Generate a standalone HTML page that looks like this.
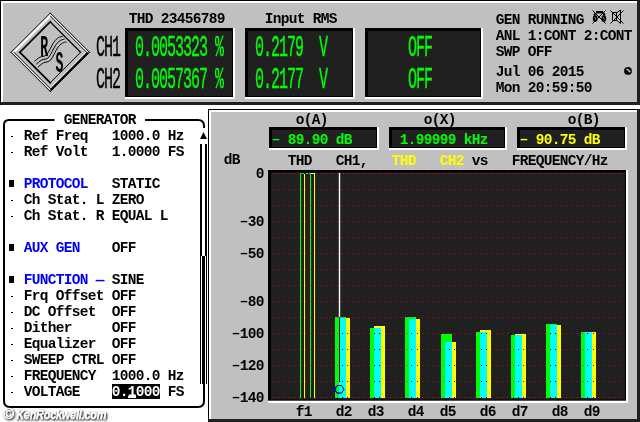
<!DOCTYPE html>
<html lang="en"><head><meta charset="utf-8"><title>Audio Analyzer - THD</title>
<style>
html,body{margin:0;padding:0;background:#fff;}
body{width:640px;height:422px;overflow:hidden;}
svg{display:block;will-change:transform;}
text{font-family:"Liberation Mono","DejaVu Sans Mono",monospace;font-weight:bold;font-size:14.5px;letter-spacing:-0.7px;fill:#000;white-space:pre;}
.big{font-weight:normal;stroke-width:0.2px;font-size:15px;letter-spacing:-1px;}
.g{fill:#00ff00;}
.y{fill:#ffff00;}
.b{fill:#0000ff;}
.wm{font-family:"Liberation Sans",sans-serif;font-style:italic;font-weight:bold;font-size:13px;letter-spacing:-0.2px;fill:#fff;stroke:#fff;stroke-width:0.25px;}
</style></head><body>
<svg width="640" height="422" viewBox="0 0 640 422">
<rect x="0" y="0" width="640" height="422" fill="#fff"/>
<g shape-rendering="crispEdges">
<rect x="0" y="0" width="640" height="105" fill="#202020" />
<rect x="0" y="0" width="639" height="1" fill="#000" />
<rect x="0" y="0" width="1" height="105" fill="#000" />
<rect x="1" y="1" width="636" height="101" fill="#fff" />
<rect x="3" y="3" width="634" height="99" fill="#c0c0c0" />
<rect x="125" y="28" width="110" height="71" fill="#fff" />
<rect x="125" y="28" width="108" height="69" fill="#000" />
<rect x="128" y="31" width="104" height="65" fill="#202020" />
<rect x="245" y="28" width="110" height="71" fill="#fff" />
<rect x="245" y="28" width="108" height="69" fill="#000" />
<rect x="248" y="31" width="104" height="65" fill="#202020" />
<rect x="365" y="28" width="118" height="71" fill="#fff" />
<rect x="365" y="28" width="116" height="69" fill="#000" />
<rect x="368" y="31" width="112" height="65" fill="#202020" />
</g>
<g id="logo">
<polygon points="11.30,52.30 50.30,13.30 50.30,17.30 15.30,52.30" fill="#fff"/>
<polygon points="89.90,52.30 50.30,91.90 50.30,88.70 86.70,52.30" fill="#000"/>
<line x1="85.90" y1="52.30" x2="50.30" y2="87.90" stroke="#fff" stroke-width="0.8" stroke-linecap="square"/>
<line x1="50.30" y1="14.30" x2="88.30" y2="52.30" stroke="#fff" stroke-width="0.9" stroke-linecap="square"/>
<line x1="50.30" y1="16.10" x2="86.50" y2="52.30" stroke="#000" stroke-width="0.8" stroke-linecap="square"/>
<line x1="50.30" y1="90.30" x2="12.30" y2="52.30" stroke="#fff" stroke-width="0.9" stroke-linecap="square"/>
<line x1="50.30" y1="88.50" x2="14.10" y2="52.30" stroke="#000" stroke-width="0.8" stroke-linecap="square"/>
<line x1="11.10" y1="52.30" x2="50.30" y2="13.10" stroke="#000" stroke-width="1.0" stroke-linecap="square"/>
<line x1="50.30" y1="13.10" x2="89.50" y2="52.30" stroke="#000" stroke-width="1.0" stroke-linecap="square"/>
<line x1="50.30" y1="91.50" x2="11.10" y2="52.30" stroke="#000" stroke-width="1.0" stroke-linecap="square"/>
<line x1="89.50" y1="52.30" x2="50.30" y2="91.50" stroke="#000" stroke-width="1.0" stroke-linecap="square"/>
<line x1="19.80" y1="52.30" x2="50.30" y2="21.80" stroke="#000" stroke-width="1.7" stroke-linecap="square"/>
<line x1="50.30" y1="82.80" x2="19.80" y2="52.30" stroke="#000" stroke-width="1.7" stroke-linecap="square"/>
<line x1="50.30" y1="22.00" x2="80.60" y2="52.30" stroke="#000" stroke-width="1.2" stroke-linecap="square"/>
<line x1="80.60" y1="52.30" x2="50.30" y2="82.60" stroke="#000" stroke-width="1.0" stroke-linecap="square"/>
<path d="M34.30,61.40 C35.25,60.68 37.95,58.22 40.00,57.10 C42.05,55.98 44.32,57.15 46.60,54.70 C48.88,52.25 51.73,45.23 53.70,42.40 C55.67,39.57 56.90,38.72 58.40,37.70 C59.90,36.68 61.98,36.53 62.70,36.30" fill="none" stroke="#000" stroke-width="1"/>
<path d="M36.20,64.20 C37.15,63.48 39.85,61.02 41.90,59.90 C43.95,58.78 46.22,59.95 48.50,57.50 C50.78,55.05 53.63,48.03 55.60,45.20 C57.57,42.37 58.80,41.52 60.30,40.50 C61.80,39.48 63.88,39.33 64.60,39.10" fill="none" stroke="#000" stroke-width="1"/>
<path d="M38.10,67.00 C39.05,66.28 41.75,63.82 43.80,62.70 C45.85,61.58 48.12,62.75 50.40,60.30 C52.68,57.85 55.53,50.83 57.50,48.00 C59.47,45.17 60.70,44.32 62.20,43.30 C63.70,42.28 65.78,42.13 66.50,41.90" fill="none" stroke="#000" stroke-width="1"/>
</g>
<text transform="translate(40.2,56.3) scale(0.88,2)" style="font-size:15px;letter-spacing:0">R</text>
<text transform="translate(55.6,71.5) scale(0.88,2)" style="font-size:15px;letter-spacing:0">S</text>
<text transform="translate(96,56) scale(1,2)" class="big " stroke="#000" xml:space="preserve">CH1</text>
<text transform="translate(96,88) scale(1,2)" class="big " stroke="#000" xml:space="preserve">CH2</text>
<text transform="translate(128.7,23) scale(1,1.035)" xml:space="preserve">THD 23456789</text>
<text transform="translate(264.7,23) scale(1,1.035)" xml:space="preserve">Input RMS</text>
<text transform="translate(135,56) scale(1,2)" class="big g" stroke="#00ff00" xml:space="preserve">0.0053323 %</text>
<text transform="translate(135,88) scale(1,2)" class="big g" stroke="#00ff00" xml:space="preserve">0.0057367 %</text>
<text transform="translate(255,56) scale(1,2)" class="big g" stroke="#00ff00" xml:space="preserve">0.2179  V</text>
<text transform="translate(255,88) scale(1,2)" class="big g" stroke="#00ff00" xml:space="preserve">0.2177  V</text>
<text transform="translate(408,56) scale(1,2)" class="big g" stroke="#00ff00" xml:space="preserve">OFF</text>
<text transform="translate(408,88) scale(1,2)" class="big g" stroke="#00ff00" xml:space="preserve">OFF</text>
<text transform="translate(495.7,24) scale(1,1.035)" xml:space="preserve">GEN RUNNING</text>
<text transform="translate(495.7,40) scale(1,1.035)" xml:space="preserve">ANL 1:CONT 2:CONT</text>
<text transform="translate(495.7,56) scale(1,1.035)" xml:space="preserve">SWP OFF</text>
<text transform="translate(495.7,76) scale(1,1.035)" xml:space="preserve">Jul 06 2015</text>
<text transform="translate(495.7,92) scale(1,1.035)" xml:space="preserve">Mon 20:59:50</text>
<g id="icons" fill="none" stroke="#000" stroke-width="1">
<path d="M592.5,10.5 L605.5,23.5 M605.5,10.5 L592.5,23.5"/>
<path d="M596,12.2 H603" stroke-width="2.4"/>
<path d="M595.6,13 L594.2,15.5 M603.4,13 L604.8,15.5" stroke-width="2"/>
<ellipse cx="595.2" cy="18.6" rx="2.4" ry="3.4" fill="#000" stroke="none"/><ellipse cx="603.8" cy="18.6" rx="2.4" ry="3.4" fill="#000" stroke="none"/>
<path d="M594.8,17 q1.3,1 0.6,2.6 M602.8,17 q1.5,0.6 1.2,2.4" stroke="#c0c0c0" stroke-width="0.8"/>
<rect x="598.4" y="16.4" width="1.6" height="1.6" fill="#000" stroke="none"/>
<path d="M610.5,10.5 L623.5,23.5 M623.5,10.5 L610.5,23.5"/>
<path d="M612.5,12.5 h4 v8 h-4z"/>
<path d="M616.5,13 L620.5,10 V23.5 L616.5,20"/>
</g>
<circle cx="628" cy="70.9" r="3.9" fill="#000"/><path d="M626.6,68.8 L630.4,72.1" stroke="#c0c0c0" stroke-width="1.5" fill="none"/>
<g id="genpanel">
<path d="M54.5,120 H9 Q4,120 4,125 V401 Q4,407 10,407 H198 Q204,407 204,401 V384" fill="none" stroke="#000" stroke-width="2"/>
<path d="M145,120 H198 Q204,120 204,126 V128" fill="none" stroke="#000" stroke-width="2"/>
<path d="M203.5,132 L207,139 H200 Z" fill="#000"/>
<g shape-rendering="crispEdges">
<rect x="200" y="144" width="2" height="112" fill="#000" />
<rect x="205" y="144" width="2" height="112" fill="#000" />
<rect x="200" y="256" width="1" height="128" fill="#000" />
<rect x="206" y="256" width="1" height="128" fill="#000" />
<rect x="202" y="256" width="3" height="128" fill="#000" />
</g></g>
<text transform="translate(63.7,124) scale(1,1.035)" xml:space="preserve">GENERATOR</text>
<rect x="11" y="136" width="2" height="1" fill="#000" shape-rendering="crispEdges"/>
<text transform="translate(23.7,140) scale(1,1.035)" xml:space="preserve">Ref Freq</text>
<text transform="translate(111.7,140) scale(1,1.035)" xml:space="preserve">1000.0 Hz</text>
<rect x="11" y="152" width="2" height="1" fill="#000" shape-rendering="crispEdges"/>
<text transform="translate(23.7,156) scale(1,1.035)" xml:space="preserve">Ref Volt</text>
<text transform="translate(111.7,156) scale(1,1.035)" xml:space="preserve">1.0000 FS</text>
<rect x="9" y="180" width="5" height="7" fill="#000" shape-rendering="crispEdges"/>
<text transform="translate(23.7,188) scale(1,1.035)" class="b" xml:space="preserve">PROTOCOL</text>
<text transform="translate(111.7,188) scale(1,1.035)" xml:space="preserve">STATIC</text>
<rect x="11" y="200" width="2" height="1" fill="#000" shape-rendering="crispEdges"/>
<text transform="translate(23.7,204) scale(1,1.035)" xml:space="preserve">Ch Stat. L</text>
<text transform="translate(111.7,204) scale(1,1.035)" xml:space="preserve">ZERO</text>
<rect x="11" y="216" width="2" height="1" fill="#000" shape-rendering="crispEdges"/>
<text transform="translate(23.7,220) scale(1,1.035)" xml:space="preserve">Ch Stat. R</text>
<text transform="translate(111.7,220) scale(1,1.035)" xml:space="preserve">EQUAL L</text>
<rect x="9" y="244" width="5" height="7" fill="#000" shape-rendering="crispEdges"/>
<text transform="translate(23.7,252) scale(1,1.035)" class="b" xml:space="preserve">AUX GEN</text>
<text transform="translate(111.7,252) scale(1,1.035)" xml:space="preserve">OFF</text>
<rect x="9" y="276" width="5" height="7" fill="#000" shape-rendering="crispEdges"/>
<text transform="translate(23.7,284) scale(1,1.035)" class="b" xml:space="preserve">FUNCTION —</text>
<text transform="translate(111.7,284) scale(1,1.035)" xml:space="preserve">SINE</text>
<rect x="11" y="296" width="2" height="1" fill="#000" shape-rendering="crispEdges"/>
<text transform="translate(23.7,300) scale(1,1.035)" xml:space="preserve">Frq Offset</text>
<text transform="translate(111.7,300) scale(1,1.035)" xml:space="preserve">OFF</text>
<rect x="11" y="312" width="2" height="1" fill="#000" shape-rendering="crispEdges"/>
<text transform="translate(23.7,316) scale(1,1.035)" xml:space="preserve">DC Offset</text>
<text transform="translate(111.7,316) scale(1,1.035)" xml:space="preserve">OFF</text>
<rect x="11" y="328" width="2" height="1" fill="#000" shape-rendering="crispEdges"/>
<text transform="translate(23.7,332) scale(1,1.035)" xml:space="preserve">Dither</text>
<text transform="translate(111.7,332) scale(1,1.035)" xml:space="preserve">OFF</text>
<rect x="11" y="344" width="2" height="1" fill="#000" shape-rendering="crispEdges"/>
<text transform="translate(23.7,348) scale(1,1.035)" xml:space="preserve">Equalizer</text>
<text transform="translate(111.7,348) scale(1,1.035)" xml:space="preserve">OFF</text>
<rect x="11" y="360" width="2" height="1" fill="#000" shape-rendering="crispEdges"/>
<text transform="translate(23.7,364) scale(1,1.035)" xml:space="preserve">SWEEP CTRL</text>
<text transform="translate(111.7,364) scale(1,1.035)" xml:space="preserve">OFF</text>
<rect x="11" y="376" width="2" height="1" fill="#000" shape-rendering="crispEdges"/>
<text transform="translate(23.7,380) scale(1,1.035)" xml:space="preserve">FREQUENCY</text>
<text transform="translate(111.7,380) scale(1,1.035)" xml:space="preserve">1000.0 Hz</text>
<rect x="11" y="392" width="2" height="1" fill="#000" shape-rendering="crispEdges"/>
<text transform="translate(23.7,396) scale(1,1.035)" xml:space="preserve">VOLTAGE</text>
<rect x="112" y="384" width="48" height="15" fill="#000" shape-rendering="crispEdges"/>
<text transform="translate(111.7,396) scale(1,1.035)" xml:space="preserve" style="fill:#fff">0.1000</text>
<rect x="128" y="396" width="8" height="2" fill="#fff" shape-rendering="crispEdges"/>
<text transform="translate(167.7,396) scale(1,1.035)" xml:space="preserve">FS</text>
<defs><filter id="ws" x="-5%" y="-30%" width="110%" height="170%"><feGaussianBlur in="SourceAlpha" stdDeviation="0.9" result="b"/><feOffset in="b" dx="0.8" dy="0.9" result="o"/><feComponentTransfer in="o" result="s"><feFuncA type="linear" slope="1.7"/></feComponentTransfer><feFlood flood-color="#505050" result="f"/><feComposite in="f" in2="s" operator="in" result="sh"/><feMerge><feMergeNode in="sh"/><feMergeNode in="SourceGraphic"/></feMerge></filter></defs>
<g filter="url(#ws)" style="fill:#fff;stroke:#fff;stroke-width:0.25px"><text x="3.6" y="419.3" class="wm" style="font-size:14px;font-style:normal;font-weight:normal;stroke-width:.5px">©</text><text x="16.2" y="419" class="wm" textLength="90" lengthAdjust="spacingAndGlyphs">KenRockwell.com</text></g>
<g shape-rendering="crispEdges">
<rect x="208" y="109" width="432" height="313" fill="#202020" />
<rect x="208" y="109" width="429" height="1" fill="#000" />
<rect x="208" y="109" width="1" height="313" fill="#000" />
<rect x="209" y="110" width="428" height="309" fill="#fff" />
<rect x="211" y="112" width="426" height="307" fill="#c0c0c0" />
<rect x="269" y="127" width="110" height="23" fill="#fff" />
<rect x="269" y="127" width="108" height="21" fill="#000" />
<rect x="272" y="130" width="104" height="17" fill="#202020" />
<rect x="389" y="127" width="118" height="23" fill="#fff" />
<rect x="389" y="127" width="116" height="21" fill="#000" />
<rect x="392" y="130" width="112" height="17" fill="#202020" />
<rect x="517" y="127" width="110" height="23" fill="#fff" />
<rect x="517" y="127" width="108" height="21" fill="#000" />
<rect x="520" y="130" width="104" height="17" fill="#202020" />
</g>
<rect x="268" y="170" width="360" height="233" fill="#fff" />
<rect x="268" y="170" width="358" height="230.7" fill="#000" />
<rect x="271" y="172.5" width="354" height="227" fill="#202020" />
<text transform="translate(295.7,124) scale(1,1.035)" xml:space="preserve">o(A)</text>
<text transform="translate(423.7,124) scale(1,1.035)" xml:space="preserve">o(X)</text>
<text transform="translate(567.7,124) scale(1,1.035)" xml:space="preserve">o(B)</text>
<text transform="translate(269.10,141.70) scale(1.6,0.8)" class="g">-</text>
<text transform="translate(279.7,144) scale(1,1.035)" class="g" xml:space="preserve"> 89.90 dB</text>
<text transform="translate(399.7,144) scale(1,1.035)" class="g" xml:space="preserve">1.99999 kHz</text>
<text transform="translate(517.10,141.70) scale(1.6,0.8)" class="y">-</text>
<text transform="translate(527.7,144) scale(1,1.035)" class="y" xml:space="preserve"> 90.75 dB</text>
<text transform="translate(223.7,164) scale(1,1.035)" xml:space="preserve">dB</text>
<text transform="translate(287.7,164.5) scale(1,1.035)" xml:space="preserve">THD</text>
<text transform="translate(335.7,164.5) scale(1,1.035)" xml:space="preserve">CH1,</text>
<text transform="translate(391.7,164.5) scale(1,1.035)" class="y" xml:space="preserve">THD</text>
<text transform="translate(439.7,164.5) scale(1,1.035)" class="y" xml:space="preserve">CH2</text>
<text transform="translate(471.7,164.5) scale(1,1.035)" xml:space="preserve">vs</text>
<text transform="translate(511.7,164.5) scale(1,1.035)" xml:space="preserve">FREQUENCY/Hz</text>
<text transform="translate(255.7,178) scale(1,1.035)" xml:space="preserve">0</text>
<text transform="translate(237.10,223.70) scale(1.6,0.8)">-</text>
<text transform="translate(247.7,226) scale(1,1.035)" xml:space="preserve">30</text>
<text transform="translate(237.10,255.70) scale(1.6,0.8)">-</text>
<text transform="translate(247.7,258) scale(1,1.035)" xml:space="preserve">50</text>
<text transform="translate(237.10,303.70) scale(1.6,0.8)">-</text>
<text transform="translate(247.7,306) scale(1,1.035)" xml:space="preserve">80</text>
<text transform="translate(229.10,335.70) scale(1.6,0.8)">-</text>
<text transform="translate(239.7,338) scale(1,1.035)" xml:space="preserve">100</text>
<text transform="translate(229.10,367.70) scale(1.6,0.8)">-</text>
<text transform="translate(239.7,370) scale(1,1.035)" xml:space="preserve">120</text>
<text transform="translate(229.10,399.70) scale(1.6,0.8)">-</text>
<text transform="translate(239.7,402) scale(1,1.035)" xml:space="preserve">140</text>
<g shape-rendering="crispEdges">
<path d="M273,173.5h1M276,173.5h1M279,173.5h1M282,173.5h1M285,173.5h1M289,173.5h1M292,173.5h1M295,173.5h1M298,173.5h1M317,173.5h1M321,173.5h1M324,173.5h1M327,173.5h1M330,173.5h1M333,173.5h1M337,173.5h1M340,173.5h1M343,173.5h1M346,173.5h1M349,173.5h1M353,173.5h1M356,173.5h1M359,173.5h1M362,173.5h1M365,173.5h1M369,173.5h1M372,173.5h1M375,173.5h1M378,173.5h1M381,173.5h1M385,173.5h1M388,173.5h1M391,173.5h1M394,173.5h1M397,173.5h1M401,173.5h1M404,173.5h1M407,173.5h1M410,173.5h1M413,173.5h1M417,173.5h1M420,173.5h1M423,173.5h1M426,173.5h1M429,173.5h1M433,173.5h1M436,173.5h1M439,173.5h1M442,173.5h1M445,173.5h1M449,173.5h1M452,173.5h1M455,173.5h1M458,173.5h1M461,173.5h1M465,173.5h1M468,173.5h1M471,173.5h1M474,173.5h1M477,173.5h1M481,173.5h1M484,173.5h1M487,173.5h1M490,173.5h1M493,173.5h1M497,173.5h1M500,173.5h1M503,173.5h1M506,173.5h1M509,173.5h1M513,173.5h1M516,173.5h1M519,173.5h1M522,173.5h1M525,173.5h1M529,173.5h1M532,173.5h1M535,173.5h1M538,173.5h1M541,173.5h1M545,173.5h1M548,173.5h1M551,173.5h1M554,173.5h1M557,173.5h1M561,173.5h1M564,173.5h1M567,173.5h1M570,173.5h1M573,173.5h1M577,173.5h1M580,173.5h1M583,173.5h1M586,173.5h1M589,173.5h1M593,173.5h1M596,173.5h1M599,173.5h1M602,173.5h1M605,173.5h1M609,173.5h1M612,173.5h1M615,173.5h1M618,173.5h1M621,173.5h1" stroke="#ff0000" stroke-width="1" fill="none"/>
<path d="M273,189.5h1M278,189.5h1M283,189.5h1M289,189.5h1M294,189.5h1M299,189.5h1M305,189.5h1M310,189.5h1M315,189.5h1M321,189.5h1M326,189.5h1M331,189.5h1M337,189.5h1M342,189.5h1M347,189.5h1M353,189.5h1M358,189.5h1M363,189.5h1M369,189.5h1M374,189.5h1M379,189.5h1M385,189.5h1M390,189.5h1M395,189.5h1M401,189.5h1M406,189.5h1M411,189.5h1M417,189.5h1M422,189.5h1M427,189.5h1M433,189.5h1M438,189.5h1M443,189.5h1M449,189.5h1M454,189.5h1M459,189.5h1M465,189.5h1M470,189.5h1M475,189.5h1M481,189.5h1M486,189.5h1M491,189.5h1M497,189.5h1M502,189.5h1M507,189.5h1M513,189.5h1M518,189.5h1M523,189.5h1M529,189.5h1M534,189.5h1M539,189.5h1M545,189.5h1M550,189.5h1M555,189.5h1M561,189.5h1M566,189.5h1M571,189.5h1M577,189.5h1M582,189.5h1M587,189.5h1M593,189.5h1M598,189.5h1M603,189.5h1M609,189.5h1M614,189.5h1M619,189.5h1" stroke="#ff0000" stroke-width="1" fill="none"/>
<path d="M273,205.5h1M278,205.5h1M283,205.5h1M289,205.5h1M294,205.5h1M299,205.5h1M305,205.5h1M310,205.5h1M315,205.5h1M321,205.5h1M326,205.5h1M331,205.5h1M337,205.5h1M342,205.5h1M347,205.5h1M353,205.5h1M358,205.5h1M363,205.5h1M369,205.5h1M374,205.5h1M379,205.5h1M385,205.5h1M390,205.5h1M395,205.5h1M401,205.5h1M406,205.5h1M411,205.5h1M417,205.5h1M422,205.5h1M427,205.5h1M433,205.5h1M438,205.5h1M443,205.5h1M449,205.5h1M454,205.5h1M459,205.5h1M465,205.5h1M470,205.5h1M475,205.5h1M481,205.5h1M486,205.5h1M491,205.5h1M497,205.5h1M502,205.5h1M507,205.5h1M513,205.5h1M518,205.5h1M523,205.5h1M529,205.5h1M534,205.5h1M539,205.5h1M545,205.5h1M550,205.5h1M555,205.5h1M561,205.5h1M566,205.5h1M571,205.5h1M577,205.5h1M582,205.5h1M587,205.5h1M593,205.5h1M598,205.5h1M603,205.5h1M609,205.5h1M614,205.5h1M619,205.5h1" stroke="#ff0000" stroke-width="1" fill="none"/>
<path d="M273,221.5h1M278,221.5h1M283,221.5h1M289,221.5h1M294,221.5h1M299,221.5h1M305,221.5h1M310,221.5h1M315,221.5h1M321,221.5h1M326,221.5h1M331,221.5h1M337,221.5h1M342,221.5h1M347,221.5h1M353,221.5h1M358,221.5h1M363,221.5h1M369,221.5h1M374,221.5h1M379,221.5h1M385,221.5h1M390,221.5h1M395,221.5h1M401,221.5h1M406,221.5h1M411,221.5h1M417,221.5h1M422,221.5h1M427,221.5h1M433,221.5h1M438,221.5h1M443,221.5h1M449,221.5h1M454,221.5h1M459,221.5h1M465,221.5h1M470,221.5h1M475,221.5h1M481,221.5h1M486,221.5h1M491,221.5h1M497,221.5h1M502,221.5h1M507,221.5h1M513,221.5h1M518,221.5h1M523,221.5h1M529,221.5h1M534,221.5h1M539,221.5h1M545,221.5h1M550,221.5h1M555,221.5h1M561,221.5h1M566,221.5h1M571,221.5h1M577,221.5h1M582,221.5h1M587,221.5h1M593,221.5h1M598,221.5h1M603,221.5h1M609,221.5h1M614,221.5h1M619,221.5h1" stroke="#ff0000" stroke-width="1" fill="none"/>
<path d="M273,237.5h1M278,237.5h1M283,237.5h1M289,237.5h1M294,237.5h1M299,237.5h1M305,237.5h1M310,237.5h1M315,237.5h1M321,237.5h1M326,237.5h1M331,237.5h1M337,237.5h1M342,237.5h1M347,237.5h1M353,237.5h1M358,237.5h1M363,237.5h1M369,237.5h1M374,237.5h1M379,237.5h1M385,237.5h1M390,237.5h1M395,237.5h1M401,237.5h1M406,237.5h1M411,237.5h1M417,237.5h1M422,237.5h1M427,237.5h1M433,237.5h1M438,237.5h1M443,237.5h1M449,237.5h1M454,237.5h1M459,237.5h1M465,237.5h1M470,237.5h1M475,237.5h1M481,237.5h1M486,237.5h1M491,237.5h1M497,237.5h1M502,237.5h1M507,237.5h1M513,237.5h1M518,237.5h1M523,237.5h1M529,237.5h1M534,237.5h1M539,237.5h1M545,237.5h1M550,237.5h1M555,237.5h1M561,237.5h1M566,237.5h1M571,237.5h1M577,237.5h1M582,237.5h1M587,237.5h1M593,237.5h1M598,237.5h1M603,237.5h1M609,237.5h1M614,237.5h1M619,237.5h1" stroke="#ff0000" stroke-width="1" fill="none"/>
<path d="M273,253.5h1M278,253.5h1M283,253.5h1M289,253.5h1M294,253.5h1M299,253.5h1M305,253.5h1M310,253.5h1M315,253.5h1M321,253.5h1M326,253.5h1M331,253.5h1M337,253.5h1M342,253.5h1M347,253.5h1M353,253.5h1M358,253.5h1M363,253.5h1M369,253.5h1M374,253.5h1M379,253.5h1M385,253.5h1M390,253.5h1M395,253.5h1M401,253.5h1M406,253.5h1M411,253.5h1M417,253.5h1M422,253.5h1M427,253.5h1M433,253.5h1M438,253.5h1M443,253.5h1M449,253.5h1M454,253.5h1M459,253.5h1M465,253.5h1M470,253.5h1M475,253.5h1M481,253.5h1M486,253.5h1M491,253.5h1M497,253.5h1M502,253.5h1M507,253.5h1M513,253.5h1M518,253.5h1M523,253.5h1M529,253.5h1M534,253.5h1M539,253.5h1M545,253.5h1M550,253.5h1M555,253.5h1M561,253.5h1M566,253.5h1M571,253.5h1M577,253.5h1M582,253.5h1M587,253.5h1M593,253.5h1M598,253.5h1M603,253.5h1M609,253.5h1M614,253.5h1M619,253.5h1" stroke="#ff0000" stroke-width="1" fill="none"/>
<path d="M273,269.5h1M278,269.5h1M283,269.5h1M289,269.5h1M294,269.5h1M299,269.5h1M305,269.5h1M310,269.5h1M315,269.5h1M321,269.5h1M326,269.5h1M331,269.5h1M337,269.5h1M342,269.5h1M347,269.5h1M353,269.5h1M358,269.5h1M363,269.5h1M369,269.5h1M374,269.5h1M379,269.5h1M385,269.5h1M390,269.5h1M395,269.5h1M401,269.5h1M406,269.5h1M411,269.5h1M417,269.5h1M422,269.5h1M427,269.5h1M433,269.5h1M438,269.5h1M443,269.5h1M449,269.5h1M454,269.5h1M459,269.5h1M465,269.5h1M470,269.5h1M475,269.5h1M481,269.5h1M486,269.5h1M491,269.5h1M497,269.5h1M502,269.5h1M507,269.5h1M513,269.5h1M518,269.5h1M523,269.5h1M529,269.5h1M534,269.5h1M539,269.5h1M545,269.5h1M550,269.5h1M555,269.5h1M561,269.5h1M566,269.5h1M571,269.5h1M577,269.5h1M582,269.5h1M587,269.5h1M593,269.5h1M598,269.5h1M603,269.5h1M609,269.5h1M614,269.5h1M619,269.5h1" stroke="#ff0000" stroke-width="1" fill="none"/>
<path d="M273,285.5h1M278,285.5h1M283,285.5h1M289,285.5h1M294,285.5h1M299,285.5h1M305,285.5h1M310,285.5h1M315,285.5h1M321,285.5h1M326,285.5h1M331,285.5h1M337,285.5h1M342,285.5h1M347,285.5h1M353,285.5h1M358,285.5h1M363,285.5h1M369,285.5h1M374,285.5h1M379,285.5h1M385,285.5h1M390,285.5h1M395,285.5h1M401,285.5h1M406,285.5h1M411,285.5h1M417,285.5h1M422,285.5h1M427,285.5h1M433,285.5h1M438,285.5h1M443,285.5h1M449,285.5h1M454,285.5h1M459,285.5h1M465,285.5h1M470,285.5h1M475,285.5h1M481,285.5h1M486,285.5h1M491,285.5h1M497,285.5h1M502,285.5h1M507,285.5h1M513,285.5h1M518,285.5h1M523,285.5h1M529,285.5h1M534,285.5h1M539,285.5h1M545,285.5h1M550,285.5h1M555,285.5h1M561,285.5h1M566,285.5h1M571,285.5h1M577,285.5h1M582,285.5h1M587,285.5h1M593,285.5h1M598,285.5h1M603,285.5h1M609,285.5h1M614,285.5h1M619,285.5h1" stroke="#ff0000" stroke-width="1" fill="none"/>
<path d="M273,301.5h1M278,301.5h1M283,301.5h1M289,301.5h1M294,301.5h1M299,301.5h1M305,301.5h1M310,301.5h1M315,301.5h1M321,301.5h1M326,301.5h1M331,301.5h1M337,301.5h1M342,301.5h1M347,301.5h1M353,301.5h1M358,301.5h1M363,301.5h1M369,301.5h1M374,301.5h1M379,301.5h1M385,301.5h1M390,301.5h1M395,301.5h1M401,301.5h1M406,301.5h1M411,301.5h1M417,301.5h1M422,301.5h1M427,301.5h1M433,301.5h1M438,301.5h1M443,301.5h1M449,301.5h1M454,301.5h1M459,301.5h1M465,301.5h1M470,301.5h1M475,301.5h1M481,301.5h1M486,301.5h1M491,301.5h1M497,301.5h1M502,301.5h1M507,301.5h1M513,301.5h1M518,301.5h1M523,301.5h1M529,301.5h1M534,301.5h1M539,301.5h1M545,301.5h1M550,301.5h1M555,301.5h1M561,301.5h1M566,301.5h1M571,301.5h1M577,301.5h1M582,301.5h1M587,301.5h1M593,301.5h1M598,301.5h1M603,301.5h1M609,301.5h1M614,301.5h1M619,301.5h1" stroke="#ff0000" stroke-width="1" fill="none"/>
<path d="M273,317.5h1M278,317.5h1M283,317.5h1M289,317.5h1M294,317.5h1M299,317.5h1M305,317.5h1M310,317.5h1M315,317.5h1M321,317.5h1M326,317.5h1M331,317.5h1M337,317.5h1M342,317.5h1M347,317.5h1M353,317.5h1M358,317.5h1M363,317.5h1M369,317.5h1M374,317.5h1M379,317.5h1M385,317.5h1M390,317.5h1M395,317.5h1M401,317.5h1M406,317.5h1M411,317.5h1M417,317.5h1M422,317.5h1M427,317.5h1M433,317.5h1M438,317.5h1M443,317.5h1M449,317.5h1M454,317.5h1M459,317.5h1M465,317.5h1M470,317.5h1M475,317.5h1M481,317.5h1M486,317.5h1M491,317.5h1M497,317.5h1M502,317.5h1M507,317.5h1M513,317.5h1M518,317.5h1M523,317.5h1M529,317.5h1M534,317.5h1M539,317.5h1M545,317.5h1M550,317.5h1M555,317.5h1M561,317.5h1M566,317.5h1M571,317.5h1M577,317.5h1M582,317.5h1M587,317.5h1M593,317.5h1M598,317.5h1M603,317.5h1M609,317.5h1M614,317.5h1M619,317.5h1" stroke="#ff0000" stroke-width="1" fill="none"/>
<path d="M273,333.5h1M278,333.5h1M283,333.5h1M289,333.5h1M294,333.5h1M299,333.5h1M305,333.5h1M310,333.5h1M315,333.5h1M321,333.5h1M326,333.5h1M331,333.5h1M337,333.5h1M342,333.5h1M347,333.5h1M353,333.5h1M358,333.5h1M363,333.5h1M369,333.5h1M374,333.5h1M379,333.5h1M385,333.5h1M390,333.5h1M395,333.5h1M401,333.5h1M406,333.5h1M411,333.5h1M417,333.5h1M422,333.5h1M427,333.5h1M433,333.5h1M438,333.5h1M443,333.5h1M449,333.5h1M454,333.5h1M459,333.5h1M465,333.5h1M470,333.5h1M475,333.5h1M481,333.5h1M486,333.5h1M491,333.5h1M497,333.5h1M502,333.5h1M507,333.5h1M513,333.5h1M518,333.5h1M523,333.5h1M529,333.5h1M534,333.5h1M539,333.5h1M545,333.5h1M550,333.5h1M555,333.5h1M561,333.5h1M566,333.5h1M571,333.5h1M577,333.5h1M582,333.5h1M587,333.5h1M593,333.5h1M598,333.5h1M603,333.5h1M609,333.5h1M614,333.5h1M619,333.5h1" stroke="#ff0000" stroke-width="1" fill="none"/>
<path d="M273,349.5h1M278,349.5h1M283,349.5h1M289,349.5h1M294,349.5h1M299,349.5h1M305,349.5h1M310,349.5h1M315,349.5h1M321,349.5h1M326,349.5h1M331,349.5h1M337,349.5h1M342,349.5h1M347,349.5h1M353,349.5h1M358,349.5h1M363,349.5h1M369,349.5h1M374,349.5h1M379,349.5h1M385,349.5h1M390,349.5h1M395,349.5h1M401,349.5h1M406,349.5h1M411,349.5h1M417,349.5h1M422,349.5h1M427,349.5h1M433,349.5h1M438,349.5h1M443,349.5h1M449,349.5h1M454,349.5h1M459,349.5h1M465,349.5h1M470,349.5h1M475,349.5h1M481,349.5h1M486,349.5h1M491,349.5h1M497,349.5h1M502,349.5h1M507,349.5h1M513,349.5h1M518,349.5h1M523,349.5h1M529,349.5h1M534,349.5h1M539,349.5h1M545,349.5h1M550,349.5h1M555,349.5h1M561,349.5h1M566,349.5h1M571,349.5h1M577,349.5h1M582,349.5h1M587,349.5h1M593,349.5h1M598,349.5h1M603,349.5h1M609,349.5h1M614,349.5h1M619,349.5h1" stroke="#ff0000" stroke-width="1" fill="none"/>
<path d="M273,365.5h1M278,365.5h1M283,365.5h1M289,365.5h1M294,365.5h1M299,365.5h1M305,365.5h1M310,365.5h1M315,365.5h1M321,365.5h1M326,365.5h1M331,365.5h1M337,365.5h1M342,365.5h1M347,365.5h1M353,365.5h1M358,365.5h1M363,365.5h1M369,365.5h1M374,365.5h1M379,365.5h1M385,365.5h1M390,365.5h1M395,365.5h1M401,365.5h1M406,365.5h1M411,365.5h1M417,365.5h1M422,365.5h1M427,365.5h1M433,365.5h1M438,365.5h1M443,365.5h1M449,365.5h1M454,365.5h1M459,365.5h1M465,365.5h1M470,365.5h1M475,365.5h1M481,365.5h1M486,365.5h1M491,365.5h1M497,365.5h1M502,365.5h1M507,365.5h1M513,365.5h1M518,365.5h1M523,365.5h1M529,365.5h1M534,365.5h1M539,365.5h1M545,365.5h1M550,365.5h1M555,365.5h1M561,365.5h1M566,365.5h1M571,365.5h1M577,365.5h1M582,365.5h1M587,365.5h1M593,365.5h1M598,365.5h1M603,365.5h1M609,365.5h1M614,365.5h1M619,365.5h1" stroke="#ff0000" stroke-width="1" fill="none"/>
<path d="M273,381.5h1M278,381.5h1M283,381.5h1M289,381.5h1M294,381.5h1M299,381.5h1M305,381.5h1M310,381.5h1M315,381.5h1M321,381.5h1M326,381.5h1M331,381.5h1M337,381.5h1M342,381.5h1M347,381.5h1M353,381.5h1M358,381.5h1M363,381.5h1M369,381.5h1M374,381.5h1M379,381.5h1M385,381.5h1M390,381.5h1M395,381.5h1M401,381.5h1M406,381.5h1M411,381.5h1M417,381.5h1M422,381.5h1M427,381.5h1M433,381.5h1M438,381.5h1M443,381.5h1M449,381.5h1M454,381.5h1M459,381.5h1M465,381.5h1M470,381.5h1M475,381.5h1M481,381.5h1M486,381.5h1M491,381.5h1M497,381.5h1M502,381.5h1M507,381.5h1M513,381.5h1M518,381.5h1M523,381.5h1M529,381.5h1M534,381.5h1M539,381.5h1M545,381.5h1M550,381.5h1M555,381.5h1M561,381.5h1M566,381.5h1M571,381.5h1M577,381.5h1M582,381.5h1M587,381.5h1M593,381.5h1M598,381.5h1M603,381.5h1M609,381.5h1M614,381.5h1M619,381.5h1" stroke="#ff0000" stroke-width="1" fill="none"/>
<path d="M273,397.5h1M278,397.5h1M283,397.5h1M289,397.5h1M294,397.5h1M299,397.5h1M305,397.5h1M310,397.5h1M315,397.5h1M321,397.5h1M326,397.5h1M331,397.5h1M337,397.5h1M342,397.5h1M347,397.5h1M353,397.5h1M358,397.5h1M363,397.5h1M369,397.5h1M374,397.5h1M379,397.5h1M385,397.5h1M390,397.5h1M395,397.5h1M401,397.5h1M406,397.5h1M411,397.5h1M417,397.5h1M422,397.5h1M427,397.5h1M433,397.5h1M438,397.5h1M443,397.5h1M449,397.5h1M454,397.5h1M459,397.5h1M465,397.5h1M470,397.5h1M475,397.5h1M481,397.5h1M486,397.5h1M491,397.5h1M497,397.5h1M502,397.5h1M507,397.5h1M513,397.5h1M518,397.5h1M523,397.5h1M529,397.5h1M534,397.5h1M539,397.5h1M545,397.5h1M550,397.5h1M555,397.5h1M561,397.5h1M566,397.5h1M571,397.5h1M577,397.5h1M582,397.5h1M587,397.5h1M593,397.5h1M598,397.5h1M603,397.5h1M609,397.5h1M614,397.5h1M619,397.5h1" stroke="#ff0000" stroke-width="1" fill="none"/>
<path d="M300.5,398 V173.5 H304 M310.5,173 V398" fill="none" stroke="#00ff00" stroke-width="1"/>
<path d="M304.5,398 V174 M311,173.5 H314.5 V398" fill="none" stroke="#ffff00" stroke-width="1"/>
<path d="M306,173.5h2M309,173.5h1" stroke="#00ffff" stroke-width="1"/>
<rect x="301" y="173" width="1" height="1" fill="#ff00ff" />
<rect x="310" y="189" width="1" height="1" fill="#ff00ff" />
<rect x="310" y="205" width="1" height="1" fill="#ff00ff" />
<rect x="310" y="221" width="1" height="1" fill="#ff00ff" />
<rect x="310" y="237" width="1" height="1" fill="#ff00ff" />
<rect x="310" y="253" width="1" height="1" fill="#ff00ff" />
<rect x="310" y="269" width="1" height="1" fill="#ff00ff" />
<rect x="310" y="285" width="1" height="1" fill="#ff00ff" />
<rect x="310" y="301" width="1" height="1" fill="#ff00ff" />
<rect x="310" y="317" width="1" height="1" fill="#ff00ff" />
<rect x="310" y="333" width="1" height="1" fill="#ff00ff" />
<rect x="310" y="349" width="1" height="1" fill="#ff00ff" />
<rect x="310" y="365" width="1" height="1" fill="#ff00ff" />
<rect x="310" y="381" width="1" height="1" fill="#ff00ff" />
<rect x="310" y="397" width="1" height="1" fill="#ff00ff" />
<rect x="335" y="317" width="11" height="81" fill="#00ff00" />
<rect x="339" y="318" width="11" height="80" fill="#ffff00" />
<rect x="339" y="318" width="7" height="80" fill="#00ffff" />
<path d="M337,317.5h1" stroke="#ff00ff" stroke-width="1" fill="none"/>
<path d="M342,317.5h1" stroke="#ff00ff" stroke-width="1" fill="none"/>
<path d="M337,333.5h1" stroke="#ff00ff" stroke-width="1" fill="none"/>
<path d="M342,333.5h1" stroke="#000000" stroke-width="1" fill="none"/>
<path d="M347,333.5h1" stroke="#0000ff" stroke-width="1" fill="none"/>
<path d="M337,349.5h1" stroke="#ff00ff" stroke-width="1" fill="none"/>
<path d="M342,349.5h1" stroke="#000000" stroke-width="1" fill="none"/>
<path d="M347,349.5h1" stroke="#0000ff" stroke-width="1" fill="none"/>
<path d="M337,365.5h1" stroke="#ff00ff" stroke-width="1" fill="none"/>
<path d="M342,365.5h1" stroke="#000000" stroke-width="1" fill="none"/>
<path d="M347,365.5h1" stroke="#0000ff" stroke-width="1" fill="none"/>
<path d="M337,381.5h1" stroke="#ff00ff" stroke-width="1" fill="none"/>
<path d="M342,381.5h1" stroke="#000000" stroke-width="1" fill="none"/>
<path d="M347,381.5h1" stroke="#0000ff" stroke-width="1" fill="none"/>
<path d="M337,397.5h1" stroke="#ff00ff" stroke-width="1" fill="none"/>
<path d="M342,397.5h1" stroke="#000000" stroke-width="1" fill="none"/>
<path d="M347,397.5h1" stroke="#0000ff" stroke-width="1" fill="none"/>
<rect x="370" y="328" width="11" height="70" fill="#00ff00" />
<rect x="374" y="326" width="11" height="72" fill="#ffff00" />
<rect x="374" y="328" width="7" height="70" fill="#00ffff" />
<path d="M374,333.5h1M379,333.5h1" stroke="#000000" stroke-width="1" fill="none"/>
<path d="M374,349.5h1M379,349.5h1" stroke="#000000" stroke-width="1" fill="none"/>
<path d="M374,365.5h1M379,365.5h1" stroke="#000000" stroke-width="1" fill="none"/>
<path d="M374,381.5h1M379,381.5h1" stroke="#000000" stroke-width="1" fill="none"/>
<path d="M374,397.5h1M379,397.5h1" stroke="#000000" stroke-width="1" fill="none"/>
<rect x="405" y="317" width="11" height="81" fill="#00ff00" />
<rect x="409" y="319" width="11" height="79" fill="#ffff00" />
<rect x="409" y="319" width="7" height="79" fill="#00ffff" />
<path d="M406,317.5h1" stroke="#ff00ff" stroke-width="1" fill="none"/>
<path d="M411,317.5h1" stroke="#ff00ff" stroke-width="1" fill="none"/>
<path d="M406,333.5h1" stroke="#ff00ff" stroke-width="1" fill="none"/>
<path d="M411,333.5h1" stroke="#000000" stroke-width="1" fill="none"/>
<path d="M417,333.5h1" stroke="#0000ff" stroke-width="1" fill="none"/>
<path d="M406,349.5h1" stroke="#ff00ff" stroke-width="1" fill="none"/>
<path d="M411,349.5h1" stroke="#000000" stroke-width="1" fill="none"/>
<path d="M417,349.5h1" stroke="#0000ff" stroke-width="1" fill="none"/>
<path d="M406,365.5h1" stroke="#ff00ff" stroke-width="1" fill="none"/>
<path d="M411,365.5h1" stroke="#000000" stroke-width="1" fill="none"/>
<path d="M417,365.5h1" stroke="#0000ff" stroke-width="1" fill="none"/>
<path d="M406,381.5h1" stroke="#ff00ff" stroke-width="1" fill="none"/>
<path d="M411,381.5h1" stroke="#000000" stroke-width="1" fill="none"/>
<path d="M417,381.5h1" stroke="#0000ff" stroke-width="1" fill="none"/>
<path d="M406,397.5h1" stroke="#ff00ff" stroke-width="1" fill="none"/>
<path d="M411,397.5h1" stroke="#000000" stroke-width="1" fill="none"/>
<path d="M417,397.5h1" stroke="#0000ff" stroke-width="1" fill="none"/>
<rect x="441" y="334" width="11" height="64" fill="#00ff00" />
<rect x="445" y="342" width="11" height="56" fill="#ffff00" />
<rect x="445" y="342" width="7" height="56" fill="#00ffff" />
<path d="M443,349.5h1" stroke="#ff00ff" stroke-width="1" fill="none"/>
<path d="M449,349.5h1" stroke="#000000" stroke-width="1" fill="none"/>
<path d="M454,349.5h1" stroke="#0000ff" stroke-width="1" fill="none"/>
<path d="M443,365.5h1" stroke="#ff00ff" stroke-width="1" fill="none"/>
<path d="M449,365.5h1" stroke="#000000" stroke-width="1" fill="none"/>
<path d="M454,365.5h1" stroke="#0000ff" stroke-width="1" fill="none"/>
<path d="M443,381.5h1" stroke="#ff00ff" stroke-width="1" fill="none"/>
<path d="M449,381.5h1" stroke="#000000" stroke-width="1" fill="none"/>
<path d="M454,381.5h1" stroke="#0000ff" stroke-width="1" fill="none"/>
<path d="M443,397.5h1" stroke="#ff00ff" stroke-width="1" fill="none"/>
<path d="M449,397.5h1" stroke="#000000" stroke-width="1" fill="none"/>
<path d="M454,397.5h1" stroke="#0000ff" stroke-width="1" fill="none"/>
<rect x="476" y="332" width="11" height="66" fill="#00ff00" />
<rect x="480" y="330" width="11" height="68" fill="#ffff00" />
<rect x="480" y="332" width="7" height="66" fill="#00ffff" />
<path d="M481,333.5h1M486,333.5h1" stroke="#000000" stroke-width="1" fill="none"/>
<path d="M481,349.5h1M486,349.5h1" stroke="#000000" stroke-width="1" fill="none"/>
<path d="M481,365.5h1M486,365.5h1" stroke="#000000" stroke-width="1" fill="none"/>
<path d="M481,381.5h1M486,381.5h1" stroke="#000000" stroke-width="1" fill="none"/>
<path d="M481,397.5h1M486,397.5h1" stroke="#000000" stroke-width="1" fill="none"/>
<rect x="511" y="335" width="11" height="63" fill="#00ff00" />
<rect x="515" y="334" width="11" height="64" fill="#ffff00" />
<rect x="515" y="335" width="7" height="63" fill="#00ffff" />
<path d="M513,349.5h1" stroke="#ff00ff" stroke-width="1" fill="none"/>
<path d="M518,349.5h1" stroke="#000000" stroke-width="1" fill="none"/>
<path d="M523,349.5h1" stroke="#0000ff" stroke-width="1" fill="none"/>
<path d="M513,365.5h1" stroke="#ff00ff" stroke-width="1" fill="none"/>
<path d="M518,365.5h1" stroke="#000000" stroke-width="1" fill="none"/>
<path d="M523,365.5h1" stroke="#0000ff" stroke-width="1" fill="none"/>
<path d="M513,381.5h1" stroke="#ff00ff" stroke-width="1" fill="none"/>
<path d="M518,381.5h1" stroke="#000000" stroke-width="1" fill="none"/>
<path d="M523,381.5h1" stroke="#0000ff" stroke-width="1" fill="none"/>
<path d="M513,397.5h1" stroke="#ff00ff" stroke-width="1" fill="none"/>
<path d="M518,397.5h1" stroke="#000000" stroke-width="1" fill="none"/>
<path d="M523,397.5h1" stroke="#0000ff" stroke-width="1" fill="none"/>
<rect x="546" y="324" width="11" height="74" fill="#00ff00" />
<rect x="550" y="325" width="11" height="73" fill="#ffff00" />
<rect x="550" y="325" width="7" height="73" fill="#00ffff" />
<path d="M550,333.5h1M555,333.5h1" stroke="#000000" stroke-width="1" fill="none"/>
<path d="M550,349.5h1M555,349.5h1" stroke="#000000" stroke-width="1" fill="none"/>
<path d="M550,365.5h1M555,365.5h1" stroke="#000000" stroke-width="1" fill="none"/>
<path d="M550,381.5h1M555,381.5h1" stroke="#000000" stroke-width="1" fill="none"/>
<path d="M550,397.5h1M555,397.5h1" stroke="#000000" stroke-width="1" fill="none"/>
<rect x="581" y="332" width="11" height="66" fill="#00ff00" />
<rect x="585" y="332" width="11" height="66" fill="#ffff00" />
<rect x="585" y="332" width="7" height="66" fill="#00ffff" />
<path d="M582,333.5h1" stroke="#ff00ff" stroke-width="1" fill="none"/>
<path d="M587,333.5h1" stroke="#000000" stroke-width="1" fill="none"/>
<path d="M593,333.5h1" stroke="#0000ff" stroke-width="1" fill="none"/>
<path d="M582,349.5h1" stroke="#ff00ff" stroke-width="1" fill="none"/>
<path d="M587,349.5h1" stroke="#000000" stroke-width="1" fill="none"/>
<path d="M593,349.5h1" stroke="#0000ff" stroke-width="1" fill="none"/>
<path d="M582,365.5h1" stroke="#ff00ff" stroke-width="1" fill="none"/>
<path d="M587,365.5h1" stroke="#000000" stroke-width="1" fill="none"/>
<path d="M593,365.5h1" stroke="#0000ff" stroke-width="1" fill="none"/>
<path d="M582,381.5h1" stroke="#ff00ff" stroke-width="1" fill="none"/>
<path d="M587,381.5h1" stroke="#000000" stroke-width="1" fill="none"/>
<path d="M593,381.5h1" stroke="#0000ff" stroke-width="1" fill="none"/>
<path d="M582,397.5h1" stroke="#ff00ff" stroke-width="1" fill="none"/>
<path d="M587,397.5h1" stroke="#000000" stroke-width="1" fill="none"/>
<path d="M593,397.5h1" stroke="#0000ff" stroke-width="1" fill="none"/>
</g>
<rect x="338.8" y="173" width="1.4" height="144" fill="#fff" />
<rect x="339" y="317" width="1" height="65" fill="#000" shape-rendering="crispEdges"/>
<path d="M337.5,385.5 h4 l2.5,3.8 l-2.5,3.8 h-4 l-2,-2 v-3.6 z" fill="none" stroke="#000" stroke-width="1"/>
<path d="M339.5,393.1 h-2 l-2,-2 v-3.6 l2,-2 h2" fill="none" stroke="#0000ff" stroke-width="1.2"/>
<text transform="translate(295.7,416) scale(1,1.035)" xml:space="preserve">f1</text>
<text transform="translate(335.7,416) scale(1,1.035)" xml:space="preserve">d2</text>
<text transform="translate(367.7,416) scale(1,1.035)" xml:space="preserve">d3</text>
<text transform="translate(407.7,416) scale(1,1.035)" xml:space="preserve">d4</text>
<text transform="translate(439.7,416) scale(1,1.035)" xml:space="preserve">d5</text>
<text transform="translate(479.7,416) scale(1,1.035)" xml:space="preserve">d6</text>
<text transform="translate(511.7,416) scale(1,1.035)" xml:space="preserve">d7</text>
<text transform="translate(551.7,416) scale(1,1.035)" xml:space="preserve">d8</text>
<text transform="translate(583.7,416) scale(1,1.035)" xml:space="preserve">d9</text>
</svg></body></html>
